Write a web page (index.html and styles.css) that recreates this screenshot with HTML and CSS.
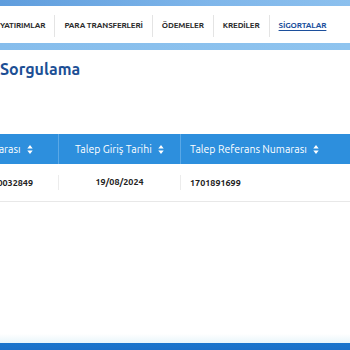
FILE: index.html
```html
<!DOCTYPE html>
<html>
	<head>
		<meta charset=utf-8>
		<title>Talep Sorgulama</title>
		<link rel="stylesheet" href="styles.css">
	</head>
	<body>
		<div class="topstrip"></div>
		<ul class="menu">
			<li>YATIRIMLAR</li>
			<li>PARA TRANSFERLERİ</li>
			<li>ÖDEMELER</li>
			<li>KREDİLER</li>
			<li class="active">SİGORTALAR</li>
		</ul>
		<div class="band"></div>

		<div id="container">
			<h1>Sorgulama</h1>
			<div class="grid">
				<div class="row head">
					<div class="cell first">Poliçe Numarası <svg class="sort" viewBox="0 0 6 10"><path d="M3 0L6 4H0z M3 10L6 6H0z"/></svg></div>
					<div class="cell mid">Talep Giriş Tarihi <svg class="sort" viewBox="0 0 6 10"><path d="M3 0L6 4H0z M3 10L6 6H0z"/></svg></div>
					<div class="cell last">Talep Referans Numarası <svg class="sort" viewBox="0 0 6 10"><path d="M3 0L6 4H0z M3 10L6 6H0z"/></svg></div>
				</div>
				<div class="row">
					<div class="cell first">10032849</div>
					<div class="cell mid">19/08/2024</div>
					<div class="cell last">1701891699</div>
				</div>
			</div>
		</div>

		<div class="footer"></div>
	</body>
</html>
```

FILE: styles.css
```css
html, body { height: 100%; }
body {
	margin: 0;
	overflow: hidden;
	background-color: #fff;
	font-family: "Ubuntu", Lato, "Open Sans", sans-serif;
	display: flex;
	flex-direction: column;
}
.topstrip {
	height: 6px;
	background: linear-gradient(90deg, #5f9ddd, #7fb6ea 60%, #8cc0ee);
}
.menu {
	list-style: none;
	margin: 0;
	padding: 3px 0 0 0;
	height: 34px;
	display: flex;
	align-items: center;
	background: #fff;
}
.menu li {
	font-size: 8px;
	font-weight: bold;
	letter-spacing: -0.15px;
	color: #2b2b2b;
	padding: 0 9px;
	line-height: 22px;
	border-left: 1px solid #e4e4e4;
}
.menu li:first-child {
	padding-left: 0;
	border-left: none;
}
.menu li.active {
	color: #1c4f9c;
	text-decoration: underline;
	text-underline-offset: 2px;
}
.band {
	height: 7px;
	background: linear-gradient(90deg, #86bdec, #8fc4ef);
}
#container h1 {
	margin: 9px 0 0 0;
	font-size: 16px;
	line-height: 20px;
	color: #1c4f95;
}
.grid {
	margin: 55px 0 0 -72px;
	border-bottom: 1px solid #e8e8e8;
}
.row {
	display: grid;
	grid-template-columns: 130px 123px 1fr;
	align-items: center;
}
.row.head {
	height: 30px;
	background: #2d8fdd;
	color: #fff;
	font-size: 10.5px;
}
.row:not(.head) {
	height: 37px;
	font-size: 9px;
	font-weight: bold;
	color: #222;
}
.cell {
	white-space: nowrap;
}
.cell.first {
	text-align: right;
	padding-right: 25px;
}
.cell.mid {
	text-align: center;
	border-left: 1px solid #5aa8e6;
	border-right: 1px solid #5aa8e6;
}
.cell.last {
	padding-left: 9px;
}
.head .cell {
	line-height: 30px;
}
.row:not(.head) .cell.mid {
	border-color: #ececec;
	line-height: 15px;
}
.sort {
	width: 6px;
	height: 9px;
	margin-left: 4px;
	fill: #fff;
	vertical-align: -1px;
}
.footer {
	margin-top: auto;
	height: 16px;
	background: linear-gradient(180deg, #fff 0, #e8f5fa 9px, #1a74cc 9px, #1a74cc 10px, #1b70c8 16px);
}
```
